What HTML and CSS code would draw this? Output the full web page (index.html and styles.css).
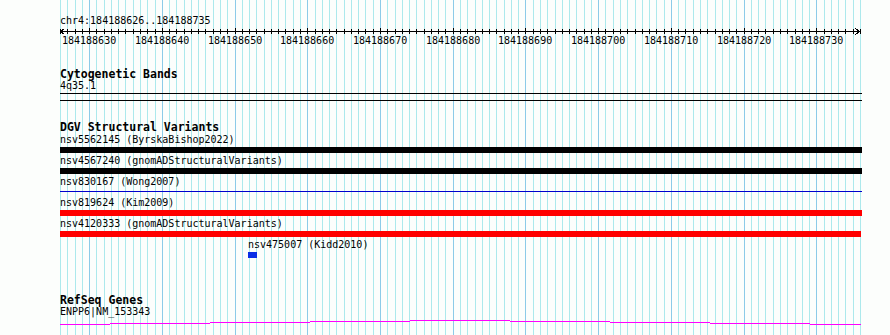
FILE: index.html
```html
<!DOCTYPE html>
<html lang="en">
<head>
  <meta charset="UTF-8" />
  <title>Genome view</title>
  <link rel="stylesheet" href="styles.css">
</head>
<body>
  <div class="browser">
    <!-- rejilla de bases, detras de las pistas -->
    <svg class="grid" id="grid" width="890" height="335"></svg>

    <div class="tracks">
      <!-- Regla -->
      <div class="ruler">
        <div class="label">chr4:184188626..184188735</div>
        <svg class="axis" id="axis" width="802" height="8"></svg>
        <div class="ruler-labels" id="rulerLabels"></div>
      </div>

      <!-- Bandas -->
      <div class="track cyto">
        <div class="track-title">Cytogenetic Bands</div>
        <div class="label">4q35.1</div>
        <div class="band-line"></div>
        <div class="band-line second"></div>
      </div>

      <!-- DGV -->
      <div class="track dgv">
        <div class="track-title">DGV Structural Variants</div>
        <div class="feature">
          <div class="label">nsv5562145 (ByrskaBishop2022)</div>
          <div class="bar black"></div>
        </div>
        <div class="feature">
          <div class="label">nsv4567240 (gnomADStructuralVariants)</div>
          <div class="bar black"></div>
        </div>
        <div class="feature">
          <div class="label">nsv830167 (Wong2007)</div>
          <div class="bar thin"></div>
        </div>
        <div class="feature">
          <div class="label">nsv819624 (Kim2009)</div>
          <div class="bar red"></div>
        </div>
        <div class="feature">
          <div class="label">nsv4120333 (gnomADStructuralVariants)</div>
          <div class="bar red short"></div>
        </div>
        <div class="feature" style="margin-left:188px">
          <div class="label">nsv475007 (Kidd2010)</div>
          <div class="bar box" style="width:9px"></div>
        </div>
      </div>

      <!-- Genes -->
      <div class="track refseq">
        <div class="track-title">RefSeq Genes</div>
        <div class="label">ENPP6|NM_153343</div>
        <svg class="gene" id="gene" width="802" height="6"></svg>
      </div>
    </div>
  </div>

  <script>
    const NS = 'http://www.w3.org/2000/svg';
    const start = 184188626, bases = 110, width = 800, left = 60;
    const bp = width / bases;

    function line(svg, x1, y1, x2, y2, cls){
      const l = document.createElementNS(NS, 'line');
      l.setAttribute('x1', x1); l.setAttribute('y1', y1);
      l.setAttribute('x2', x2); l.setAttribute('y2', y2);
      l.setAttribute('class', cls);
      svg.appendChild(l);
    }

    // Rejilla + marcas de la regla
    const grid = document.getElementById('grid');
    const axis = document.getElementById('axis');
    const labels = document.getElementById('rulerLabels');
    for (let k = 0; k <= bases; k++){
      const x = Math.round(k * bp);
      const major = (start + k) % 10 === 0;
      line(grid, left + x + 0.5, 0, left + x + 0.5, 335, major ? 'major' : 'minor');
      line(axis, x + 0.5, major ? 1 : 2, x + 0.5, 7, 'tick');
      if (major){
        const s = document.createElement('span');
        s.textContent = start + k;
        s.style.left = (x - 27) + 'px';
        labels.appendChild(s);
      }
    }
    line(axis, 0, 4.5, 800, 4.5, 'tick');
    line(axis, 0.5, 4.5, 4.5, 1.5, 'tick');
    line(axis, 0.5, 4.5, 4.5, 7.5, 'tick');
    line(axis, 799.5, 4.5, 795.5, 1.5, 'tick');
    line(axis, 799.5, 4.5, 795.5, 7.5, 'tick');

    // Linea del gen (escalonada)
    const gene = document.getElementById('gene');
    const steps = [[0,50,5],[50,150,4],[150,250,3],[250,350,2],[350,450,1],
                   [450,550,2],[550,650,3],[650,750,4],[750,801,5]];
    steps.forEach(s => line(gene, s[0], s[2] + 0.5, s[1], s[2] + 0.5, 'exon'));
  </script>
</body>
</html>
```

FILE: styles.css
```css
body {
  margin: 0;
  background: #fcfefc;
}

.browser {
  position: relative;
  width: 890px;
  height: 335px;
  overflow: hidden;
}

.grid {
  position: absolute;
  top: 0;
  left: 0;
}
.grid line {
  stroke-width: 1;
  shape-rendering: crispEdges;
}
.grid .minor { stroke: #ace9ec; }
.grid .major { stroke: #8ccbe8; }

.tracks {
  position: relative;
  padding: 15px 0 0 60px;
}

.label {
  font: 10px/12px "DejaVu Sans Mono", monospace;
  color: #000;
  white-space: nowrap;
}

.track-title {
  font: bold 11.5px/12px "DejaVu Sans Mono", monospace;
  color: #000;
  white-space: nowrap;
}

/* Regla */
.axis {
  display: block;
}
.axis line {
  stroke: #000;
  stroke-width: 1;
  shape-rendering: crispEdges;
}
.ruler-labels {
  position: relative;
  height: 12px;
}
.ruler-labels span {
  position: absolute;
  top: 0;
  width: 54px;
  text-align: center;
  font: 10px/12px "DejaVu Sans Mono", monospace;
  color: #000;
}

/* Bandas */
.cyto { margin-top: 21px; }
.band-line {
  width: 802px;
  height: 1px;
  margin-top: 1px;
  background: #000;
}
.band-line.second { margin-top: 6px; }

/* DGV */
.dgv { margin-top: 20px; }
.feature {
  padding: 1px 0;
}
.bar {
  width: 802px;
  height: 6px;
  margin-top: 1px;
}
.bar.black { background: #000; }
.bar.red { background: #ff0000; }
.bar.red.short { width: 801px; }
.bar.thin {
  background: linear-gradient(#0000cd, #0000cd) 0 2px / 100% 1px no-repeat;
}
.bar.box { background: #0a2ee6; }

/* Genes */
.refseq { margin-top: 35px; }
.gene {
  display: block;
  margin-top: 1px;
}
.gene line {
  stroke: #ff00ff;
  stroke-width: 1;
  shape-rendering: crispEdges;
}
```
